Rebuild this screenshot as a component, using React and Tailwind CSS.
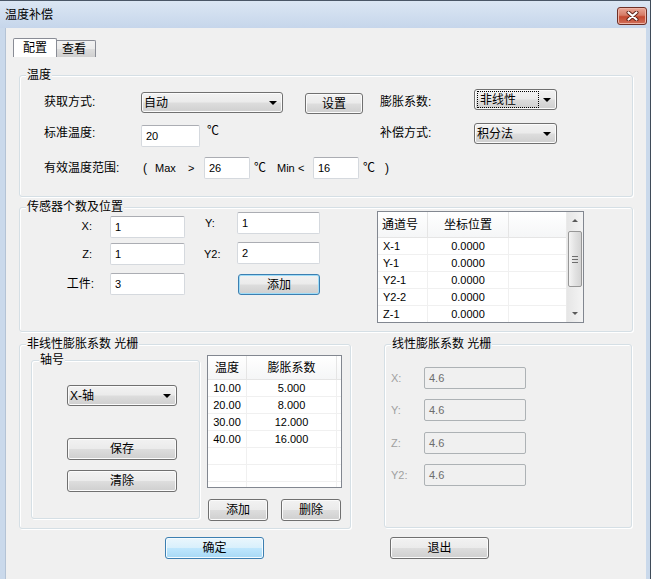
import React from 'react';

const grayBtn =
  'border border-[#707070] rounded-[3px] bg-[linear-gradient(to_bottom,#f2f2f2_0%,#ebebeb_48%,#dddddd_52%,#cfcfcf_100%)] shadow-[inset_0_0_0_1px_#fbfbfb]';
const blueBtn =
  'border border-[#3c7fb1] rounded-[3px] bg-[linear-gradient(to_bottom,#eaf6fd_0%,#d9f0fc_48%,#bee6fd_52%,#a7d9f5_100%)] shadow-[inset_0_0_0_1px_#f4fbff]';
const focusBtn =
  'border border-[#3c7fb1] rounded-[3px] bg-[linear-gradient(to_bottom,#f2f2f2_0%,#ebebeb_48%,#dddddd_52%,#cfcfcf_100%)] shadow-[inset_0_0_0_1px_#9fdcf7]';

function Btn({ className = '', variant = 'gray', children }) {
  const look = variant === 'blue' ? blueBtn : variant === 'focus' ? focusBtn : grayBtn;
  return (
    <div className={`flex items-center justify-center shrink-0 leading-[14px] ${look} ${className}`}>
      {children}
    </div>
  );
}

function Arrow({ color = 'border-t-black' }) {
  return <span className={`w-0 h-0 border-x-[4px] border-x-transparent border-t-[4px] ${color}`} />;
}

function Combo({ className = '', focus, children }) {
  return (
    <div className={`flex items-center shrink-0 pl-[2px] pr-[5px] leading-[14px] ${grayBtn} ${className}`}>
      {focus ? (
        <span className="w-[62px] h-[17px] pl-[2px] flex items-center border border-dotted border-black">
          {children}
        </span>
      ) : (
        <span>{children}</span>
      )}
      <span className="ml-auto flex">
        <Arrow />
      </span>
    </div>
  );
}

function Field({ className = '', disabled, children }) {
  return (
    <div
      className={`flex items-center shrink-0 h-[22px] pl-[4px] rounded-[2px] border text-[11px] leading-[14px] ${
        disabled
          ? 'border-[#adb2b5] bg-[#f0f0f0] text-[#6d6d6d]'
          : 'border-[#d5d9de] border-t-[#abadb3] bg-white text-black'
      } ${className}`}
    >
      {children}
    </div>
  );
}

function Group({ title, titleLeft = 'left-[6px]', className = '', children }) {
  return (
    <div
      className={`relative shrink-0 border border-[#d5dfe5] rounded-[3px] shadow-[1px_1px_0_#ffffff,inset_1px_1px_0_#ffffff] ${className}`}
    >
      <span className={`absolute top-[-8px] ${titleLeft} px-[1px] bg-[#f0f0f0] leading-[14px]`}>{title}</span>
      {children}
    </div>
  );
}

function Scrollbar() {
  return (
    <div className="w-[17px] shrink-0 flex flex-col items-center bg-[linear-gradient(to_right,#e6e6e6,#f4f4f4)] border-l border-[#eaeaea]">
      <span className="mt-[7px] w-0 h-0 border-x-[3px] border-x-transparent border-b-[3px] border-b-[#5a5a5a]" />
      <div className="mt-[9px] w-[14px] h-[56px] rounded-[2px] border border-[#979797] bg-[linear-gradient(to_right,#f4f4f4,#e2e2e2_50%,#d4d4d4)] flex flex-col items-center justify-center gap-[2px]">
        <span className="w-[6px] h-px bg-[#6d6d6d]" />
        <span className="w-[6px] h-px bg-[#6d6d6d]" />
        <span className="w-[6px] h-px bg-[#6d6d6d]" />
      </div>
      <span className="mt-auto mb-[7px] w-0 h-0 border-x-[3px] border-x-transparent border-t-[3px] border-t-[#5a5a5a]" />
    </div>
  );
}

function SensorList() {
  const rows = [
    ['X-1', '0.0000'],
    ['Y-1', '0.0000'],
    ['Y2-1', '0.0000'],
    ['Y2-2', '0.0000'],
    ['Z-1', '0.0000'],
  ];
  return (
    <div className="mt-[3px] w-[207px] h-[112px] shrink-0 border border-[#828790] bg-white flex overflow-hidden">
      <div className="flex-1 flex flex-col">
        <div className="h-[26px] shrink-0 flex border-b border-[#e5e5e5] bg-[linear-gradient(to_bottom,#ffffff,#f5f6f7)]">
          <div className="w-[50px] border-r border-[#e5e5e5] flex items-center pl-[4px]">通道号</div>
          <div className="w-[81px] border-r border-[#e5e5e5] flex items-center justify-center">坐标位置</div>
          <div className="flex-1" />
        </div>
        {rows.map(([ch, pos]) => (
          <div key={ch} className="h-[17px] shrink-0 flex border-b border-[#f0f0f0] text-[11px] leading-[14px]">
            <div className="w-[50px] border-r border-[#f0f0f0] flex items-center pl-[5px]">{ch}</div>
            <div className="w-[81px] border-r border-[#f0f0f0] flex items-center justify-center">{pos}</div>
            <div className="flex-1" />
          </div>
        ))}
      </div>
      <Scrollbar />
    </div>
  );
}

function CoefList() {
  const rows = [
    ['10.00', '5.000'],
    ['20.00', '8.000'],
    ['30.00', '12.000'],
    ['40.00', '16.000'],
    ['', ''],
    ['', ''],
    ['', ''],
  ];
  return (
    <div className="w-[135px] h-[133px] shrink-0 border border-[#828790] bg-white flex flex-col overflow-hidden">
      <div className="h-[24px] shrink-0 flex border-b border-[#e5e5e5] bg-[linear-gradient(to_bottom,#ffffff,#f5f6f7)]">
        <div className="w-[39px] border-r border-[#e5e5e5] flex items-center justify-center">温度</div>
        <div className="w-[90px] border-r border-[#e5e5e5] flex items-center justify-center">膨胀系数</div>
        <div className="flex-1" />
      </div>
      {rows.map(([t, c], i) => (
        <div key={i} className="h-[17px] shrink-0 flex border-b border-[#f0f0f0] text-[11px] leading-[14px]">
          <div className="w-[39px] border-r border-[#f0f0f0] flex items-center justify-center">{t}</div>
          <div className="w-[90px] border-r border-[#f0f0f0] flex items-center justify-center">{c}</div>
          <div className="flex-1" />
        </div>
      ))}
    </div>
  );
}

export default function App() {
  return (
    <div className="w-[651px] h-[579px] overflow-hidden flex flex-col bg-[#cad9eb] border-r border-r-[#3f4b59] [font-family:'Liberation_Sans','Noto_Sans_CJK_SC',sans-serif] text-[12px] text-black">
      {/* Title bar */}
      <div className="h-[28px] shrink-0 flex items-start border-t border-[#4a5666] bg-[linear-gradient(to_bottom,#dbe6f3,#c6d6eb)]">
        <span className="ml-[5px] mt-[7px] leading-[14px]">温度补偿</span>
        <div className="ml-auto mr-[3px] mt-[6px] w-[30px] h-[18px] rounded-[3px] border border-[#6e2f26] bg-[linear-gradient(to_bottom,#e9a797_0%,#d57b66_45%,#c4482f_55%,#d0705a_100%)] shadow-[inset_0_0_0_1px_#eeb4a6] flex items-center justify-center">
          <svg width="13" height="10" viewBox="0 0 13 10">
            <path d="M2.5 1.5 L10.5 8.5 M10.5 1.5 L2.5 8.5" stroke="#5b1e14" strokeWidth="4" strokeLinecap="round" />
            <path d="M2.5 1.5 L10.5 8.5 M10.5 1.5 L2.5 8.5" stroke="#ffffff" strokeWidth="2.2" strokeLinecap="round" />
          </svg>
        </div>
      </div>

      {/* Client area */}
      <div className="flex-1 ml-[5px] mr-[4px] bg-[#f0f0f0] border-l border-[#b4c3d5] flex flex-col">
        {/* Tabs */}
        <div className="mt-[10px] ml-[7px] h-[19px] flex items-end">
          <div className="w-[44px] h-[19px] bg-white border border-b-0 border-[#898c95] rounded-t-[2px] flex items-center justify-center leading-[14px]">
            配置
          </div>
          <div className="w-[39px] h-[17px] border border-l-0 border-b-0 border-[#898c95] rounded-tr-[2px] bg-[linear-gradient(to_bottom,#f2f2f2_0%,#ebebeb_48%,#dddddd_52%,#cfcfcf_100%)] flex items-center justify-center pr-[4px] leading-[14px]">
            查看
          </div>
        </div>

        {/* 温度 */}
        <Group title="温度" className="mt-[18px] ml-[13px] w-[614px] h-[122px]">
          <div className="flex flex-col pt-[13px] pl-[24px]">
            <div className="flex items-start h-[25px]">
              <div className="w-[336px] shrink-0 flex items-start">
                <span className="w-[97px] mt-[6px] leading-[14px]">获取方式:</span>
                <Combo className="w-[142px] h-[21px] mt-[3px]">自动</Combo>
                <Btn className="ml-[22px] w-[58px] h-[21px] mt-[4px]">设置</Btn>
              </div>
              <span className="w-[94px] mt-[6px] leading-[14px]">膨胀系数:</span>
              <Combo className="w-[83px] h-[21px]" focus>
                非线性
              </Combo>
            </div>
            <div className="flex items-start h-[24px] mt-[9px]">
              <div className="w-[336px] shrink-0 flex items-start">
                <span className="w-[97px] mt-[3px] leading-[14px]">标准温度:</span>
                <Field className="w-[59px] mt-[2px]">20</Field>
                <span className="ml-[7px] mt-[1px] leading-[14px]">℃</span>
              </div>
              <span className="w-[94px] mt-[3px] leading-[14px]">补偿方式:</span>
              <Combo className="w-[83px] h-[21px]">积分法</Combo>
            </div>
            <div className="flex items-center h-[22px] mt-[10px] leading-[14px]">
              <span className="w-[97px]">有效温度范围:</span>
              <span className="ml-[2px] w-[12px]">(</span>
              <span className="w-[33px] text-[11px]">Max</span>
              <span className="w-[16px] text-[11px]">&gt;</span>
              <Field className="w-[46px]">26</Field>
              <span className="ml-[4px] w-[23px]">℃</span>
              <span className="w-[21px] text-[11px]">Min</span>
              <span className="w-[15px] text-[11px]">&lt;</span>
              <Field className="w-[46px]">16</Field>
              <span className="ml-[4px] w-[22px]">℃</span>
              <span>)</span>
            </div>
          </div>
        </Group>

        {/* 传感器个数及位置 */}
        <Group title="传感器个数及位置" className="mt-[10px] ml-[13px] w-[614px] h-[125px]">
          <div className="flex">
            <div className="w-[357px] shrink-0 flex flex-col pt-[4px]">
              <div className="flex items-start h-[26px]">
                <span className="w-[90px] text-right pr-[18px] mt-[7px] text-[11px] leading-[14px]">X:</span>
                <Field className="w-[75px] mt-[4px]">1</Field>
                <span className="w-[52px] pl-[20px] mt-[4px] text-[11px] leading-[14px]">Y:</span>
                <Field className="w-[83px]">1</Field>
              </div>
              <div className="flex items-start h-[23px] mt-[4px]">
                <span className="w-[90px] text-right pr-[18px] mt-[5px] text-[11px] leading-[14px]">Z:</span>
                <Field className="w-[75px] mt-[1px]">1</Field>
                <span className="w-[52px] pl-[19px] mt-[5px] text-[11px] leading-[14px]">Y2:</span>
                <Field className="w-[83px]">2</Field>
              </div>
              <div className="flex items-start h-[22px] mt-[8px]">
                <span className="w-[90px] text-right pr-[16px] mt-[4px] leading-[14px]">工件:</span>
                <Field className="w-[75px]">3</Field>
                <Btn variant="focus" className="ml-[53px] mt-[1px] w-[82px] h-[21px]">
                  添加
                </Btn>
              </div>
            </div>
            <SensorList />
          </div>
        </Group>

        {/* Bottom groups */}
        <div className="flex mt-[12px] ml-[13px]">
          <Group title="非线性膨胀系数 光栅" className="w-[332px] h-[185px]">
            <div className="flex">
              <Group title="轴号" titleLeft="left-[7px]" className="ml-[11px] mt-[15px] w-[169px] h-[159px]">
                <div className="flex flex-col pl-[35px] pt-[24px]">
                  <Combo className="w-[110px] h-[21px] pr-[4px]">X-轴</Combo>
                  <Btn className="mt-[32px] w-[110px] h-[22px]">保存</Btn>
                  <Btn className="mt-[10px] w-[110px] h-[22px]">清除</Btn>
                </div>
              </Group>
              <div className="ml-[7px] mt-[10px] flex flex-col">
                <CoefList />
                <div className="flex mt-[11px] ml-[1px] gap-[13px]">
                  <Btn className="w-[60px] h-[22px]">添加</Btn>
                  <Btn className="w-[60px] h-[22px]">删除</Btn>
                </div>
              </div>
            </div>
          </Group>

          <Group title="线性膨胀系数 光栅" className="ml-[33px] w-[248px] h-[184px]">
            <div className="flex flex-col pl-[6px] pt-[22px]">
              {[
                ['X:', 'mt-0'],
                ['Y:', 'mt-[10px]'],
                ['Z:', 'mt-[11px]'],
                ['Y2:', 'mt-[10px]'],
              ].map(([label, gap]) => (
                <div key={label} className={`flex items-center h-[22px] ${gap}`}>
                  <span className="w-[33px] text-[11px] leading-[14px] text-[#a0a0a0]">{label}</span>
                  <Field disabled className="w-[102px]">
                    4.6
                  </Field>
                </div>
              ))}
            </div>
          </Group>
        </div>

        {/* Dialog buttons */}
        <div className="flex mt-[8px] ml-[159px]">
          <Btn variant="blue" className="w-[99px] h-[22px]">
            确定
          </Btn>
          <Btn className="ml-[126px] w-[99px] h-[22px]">退出</Btn>
        </div>
      </div>
    </div>
  );
}
